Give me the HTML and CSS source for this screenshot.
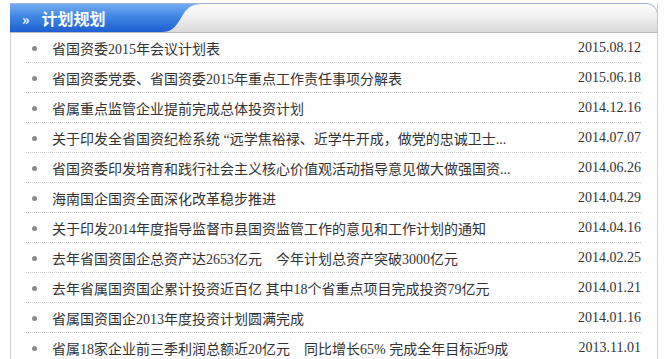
FILE: index.html
```html
<!DOCTYPE html>
<html lang="zh-CN">
<head>
    <meta charset="UTF-8">
    <title>计划规划</title>
    <link rel="stylesheet" href="styles.css">
</head>
<body>
    <div class="panel">
        <div class="panel-head">
            <div class="tab"><span class="arrows">&raquo;</span>计划规划</div>
            <svg class="tab-curve" width="42" height="28" viewBox="0 0 42 28">
                <defs>
                    <linearGradient id="blue" x1="0" y1="0" x2="0" y2="1">
                        <stop offset="0" stop-color="#74acf0"/>
                        <stop offset="0.45" stop-color="#3f86e4"/>
                        <stop offset="1" stop-color="#1d5fd2"/>
                    </linearGradient>
                </defs>
                <path d="M0 0 H42 C28 0 25 4 19 14 C13 24 9 28 0 28 Z" fill="url(#blue)"/>
            </svg>
        </div>
        <ul class="news-list">
            <li><span class="title">省国资委2015年会议计划表</span><span class="date">2015.08.12</span></li>
            <li><span class="title">省国资委党委、省国资委2015年重点工作责任事项分解表</span><span class="date">2015.06.18</span></li>
            <li><span class="title">省属重点监管企业提前完成总体投资计划</span><span class="date">2014.12.16</span></li>
            <li><span class="title">关于印发全省国资纪检系统 “远学焦裕禄、近学牛开成，做党的忠诚卫士...</span><span class="date">2014.07.07</span></li>
            <li><span class="title">省国资委印发培育和践行社会主义核心价值观活动指导意见做大做强国资...</span><span class="date">2014.06.26</span></li>
            <li><span class="title">海南国企国资全面深化改革稳步推进</span><span class="date">2014.04.29</span></li>
            <li><span class="title">关于印发2014年度指导监督市县国资监管工作的意见和工作计划的通知</span><span class="date">2014.04.16</span></li>
            <li><span class="title">去年省国资国企总资产达2653亿元　今年计划总资产突破3000亿元</span><span class="date">2014.02.25</span></li>
            <li><span class="title">去年省属国资国企累计投资近百亿 其中18个省重点项目完成投资79亿元</span><span class="date">2014.01.21</span></li>
            <li><span class="title">省属国资国企2013年度投资计划圆满完成</span><span class="date">2014.01.16</span></li>
            <li><span class="title">省属18家企业前三季利润总额近20亿元　同比增长65% 完成全年目标近9成</span><span class="date">2013.11.01</span></li>
        </ul>
    </div>
</body>
</html>
```

FILE: styles.css
```css
body {
    margin: 0;
    background-color: #fff;
    font-family: "Liberation Serif", "Noto Sans CJK SC", serif;
    font-size: 14px;
    color: #333;
}
.panel {
    margin: 3px 0 0 10px;
    width: 646px;
    border-left: 1px solid #cfcfcf;
    border-right: 1px solid #cfcfcf;
}
.panel-head {
    display: flex;
    height: 28px;
    margin: 0 -1px;
    border-top: 1px solid #9fb4d6;
    border-bottom: 1px solid #b9b9b9;
    border-right: 1px solid #c4c4c4;
    border-top-right-radius: 12px;
    background: linear-gradient(#fdfdfd, #efefef 50%, #d9d9d9);
}
.tab {
    width: 140px;
    padding-left: 12px;
    line-height: 28px;
    font-family: "Noto Sans CJK SC", sans-serif;
    font-size: 16px;
    font-weight: bold;
    color: #fff;
    background: linear-gradient(#74acf0, #3f86e4 45%, #1d5fd2);
}
.arrows {
    margin-right: 12px;
    font-size: 14px;
}
.tab-curve {
    display: block;
}
.news-list {
    list-style: none;
    margin: 0;
    padding: 0 16px 0 15px;
}
.news-list li {
    display: flex;
    justify-content: space-between;
    align-items: center;
    height: 29px;
    border-bottom: 1px dotted #c8c8c8;
}
.news-list li:last-child {
    border-bottom: none;
}
.title {
    position: relative;
    padding-left: 26px;
}
.title::before {
    content: "";
    position: absolute;
    left: 6px;
    top: 50%;
    width: 5px;
    height: 5px;
    margin-top: -2px;
    border-radius: 50%;
    background-color: #8a8a8a;
}
.date {
    color: #333;
}
```
